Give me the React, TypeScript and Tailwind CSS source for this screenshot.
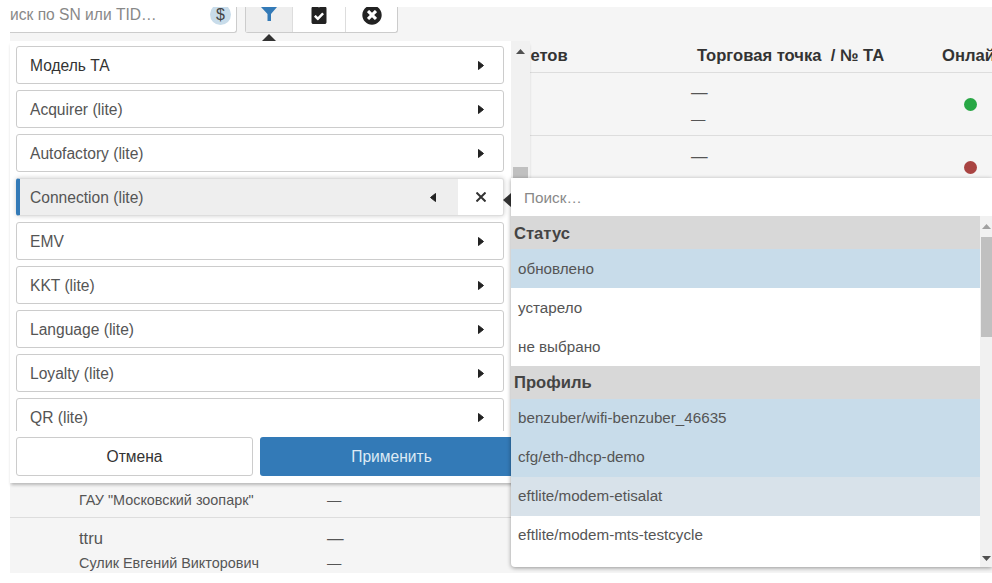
import { FaClipboardCheck, FaTimesCircle } from "react-icons/fa"

const filters = [
  "Модель ТА",
  "Acquirer (lite)",
  "Autofactory (lite)",
  "Connection (lite)",
  "EMV",
  "KKT (lite)",
  "Language (lite)",
  "Loyalty (lite)",
  "QR (lite)",
]

const groups = [
  {
    title: "Статус",
    head: "pt-[3px]",
    items: [
      { label: "обновлено", tone: "bg-[#c8dcea] pt-[2px]" },
      { label: "устарело", tone: "pt-[2px]" },
      { label: "не выбрано", tone: "pt-[2px]" },
    ],
  },
  {
    title: "Профиль",
    head: "pt-[2px]",
    items: [
      { label: "benzuber/wifi-benzuber_46635", tone: "bg-[#c8dcea]" },
      { label: "cfg/eth-dhcp-demo", tone: "bg-[#c8dcea]" },
      { label: "eftlite/modem-etisalat", tone: "bg-[#d8e2ea]" },
      { label: "eftlite/modem-mts-testcycle", tone: "" },
    ],
  },
]

function Caret({ dir }: { dir: "left" | "right" }) {
  return (
    <svg width="8" height="11" viewBox="0 0 8 11" className="fill-[#222] stroke-[#222]">
      <path strokeWidth="1" strokeLinejoin="round" d={dir === "right" ? "M1.5 1.5 L6.5 5.5 L1.5 9.5 Z" : "M6.5 1.5 L1.5 5.5 L6.5 9.5 Z"} />
    </svg>
  )
}

function FilterRow({ name }: { name: string }) {
  if (name === "Connection (lite)") {
    return (
      <div className="flex h-[38px] shrink-0 overflow-hidden rounded-[3px] border border-l-4 border-[#ddd] border-l-[#337ab7] bg-[#eeeeee] shadow-[0_0_5px_rgba(0,0,0,0.2)]">
        <div className="flex flex-1 items-center justify-between pl-[10px] pr-5">
          <span className="pt-[1px] text-[#555]">{name}</span>
          <Caret dir="left" />
        </div>
        <div className="flex w-[46px] items-center justify-center border-l border-[#eee] bg-white">
          <svg width="10" height="10" viewBox="0 0 10 10" className="stroke-[#333] stroke-2">
            <path d="M0.5 0.5 L9.5 9.5 M9.5 0.5 L0.5 9.5" />
          </svg>
        </div>
      </div>
    )
  }
  return (
    <div className="flex h-[38px] shrink-0 items-center justify-between rounded-[3px] border border-[#ccc] bg-white pl-[13px] pr-[18px]">
      <span className={name === "Модель ТА" ? "pt-[1px] text-[#333]" : "pt-[1px] text-[#555]"}>{name}</span>
      <Caret dir="right" />
    </div>
  )
}

function Scrollbar({ thumb }: { thumb: string }) {
  return (
    <div className="flex w-[19px] shrink-0 flex-col items-center bg-[#f1f1f1]">
      <svg width="9" height="5" viewBox="0 0 9 5" className="mt-[8px] shrink-0 fill-[#505050]">
        <path d="M0 5 L4.5 0 L9 5 Z" />
      </svg>
      <div className={thumb} />
    </div>
  )
}

export default function App() {
  return (
    <div className="relative h-[583px] w-[992px] overflow-hidden bg-white font-['Liberation_Sans',Arial,sans-serif] text-[14.4px] text-[#555]">
      <div className="ml-[10px] mt-[7px] h-[566px] overflow-hidden bg-[#f5f5f5]">
        <div className="flex h-[26px] gap-2">
          <div className="flex w-[227px] justify-between rounded-br-[3px] border-b border-r border-[#ccc] bg-white pr-[5px]">
            <span className="overflow-hidden whitespace-nowrap text-[15.6px] leading-[16px] text-[#888]">иск по SN или TID…</span>
            <span className="-mt-[3px] flex h-[21px] w-[21px] items-center justify-center rounded-full bg-[#c8dcea] text-[16px] text-[#444]">$</span>
          </div>
          <div className="flex rounded-b-[3px] border-x border-b border-[#ccc] bg-white">
            <div className="flex w-[46px] items-start justify-center overflow-hidden bg-[#eeeeee]">
              <svg width="16" height="14" viewBox="0 0 16 14" className="fill-[#337ab7]">
                <path d="M0 0 H16 L10 7 V14 H6.5 V7 Z" />
              </svg>
            </div>
            <div className="flex w-[53px] items-start justify-center overflow-hidden border-l border-[#ddd]">
              <FaClipboardCheck className="-mt-[3px] text-[20px] text-[#222]" />
            </div>
            <div className="flex w-[52px] items-start justify-center overflow-hidden border-l border-[#ddd]">
              <FaTimesCircle className="-mt-[2px] text-[20px] text-[#222]" />
            </div>
          </div>
        </div>

        <div className="mt-[7px] grid h-[32px] grid-cols-[69px_248px_364px_251px_1fr] items-center whitespace-nowrap text-[16.6px] font-bold text-[#333]">
          <span />
          <span />
          <span className="pl-[182px]">Счетов</span>
          <span className="pl-[6px]">Торговая точка&nbsp; / № ТА</span>
          <span>Онлайн</span>
        </div>

        <div className="grid h-[63px] grid-cols-[69px_248px_364px_251px_1fr] items-center border-t border-[#ddd]">
          <span />
          <span />
          <span />
          <div className="mt-[3px] flex flex-col gap-[6px]">
            <span className="text-[16.6px] leading-[20px]">—</span>
            <span className="leading-[20px]">—</span>
          </div>
          <span className="ml-[22px] h-[13px] w-[13px] rounded-full bg-[#28a745]" />
        </div>
        <div className="grid h-[63px] grid-cols-[69px_248px_364px_251px_1fr] items-start border-t border-[#ddd]">
          <span />
          <span />
          <span />
          <span className="mt-[11px] text-[16.6px] leading-[20px]">—</span>
          <span className="ml-[22px] mt-[25px] h-[13px] w-[13px] rounded-full bg-[#a94442]" />
        </div>

        <div className="h-[283px]" />

        <div className="grid h-[36px] grid-cols-[69px_248px_1fr] items-center pt-[4px]">
          <span />
          <span>ГАУ "Московский зоопарк"</span>
          <span>—</span>
        </div>
        <div className="grid grid-cols-[69px_248px_1fr] border-t border-[#ddd] pt-[11px]">
          <span />
          <span className="text-[16.6px] leading-[20px]">ttru</span>
          <span className="text-[16.6px] leading-[20px]">—</span>
          <span />
          <span className="mt-[4px] leading-[20px]">Сулик Евгений Викторович</span>
          <span className="mt-[4px] leading-[20px]">—</span>
        </div>
      </div>

      {/* фильтры */}
      <svg width="14" height="7" viewBox="0 0 14 7" className="absolute left-[262px] top-[34px] fill-[#333]">
        <path d="M0 7 L7 0 L14 7 Z" />
      </svg>
      <div className="absolute left-[10px] top-[41px] flex h-[442px] w-[520px] flex-col bg-white text-[15.6px] shadow-[0_3px_3px_-1px_rgba(0,0,0,0.25)]">
        <div className="flex h-[390px] overflow-hidden">
          <div className="flex flex-1 flex-col gap-[6px] pl-[6px] pr-[7px] pt-[5px]">
            {filters.map((name) => (
              <FilterRow key={name} name={name} />
            ))}
          </div>
          <Scrollbar thumb="mt-[113px] h-[14px] w-[15px] bg-[#c0c0c0]" />
        </div>
        <div className="flex gap-[7px] pl-[6px] pt-[6px]">
          <div className="flex h-[39px] w-[237px] items-center justify-center rounded-[3px] border border-[#ccc] bg-white text-[#333]">Отмена</div>
          <div className="flex h-[39px] w-[263px] items-center justify-center rounded-[3px] bg-[#337ab7] text-[#ddeaf5]">Применить</div>
        </div>
      </div>

      {/* выпадающий список */}
      <svg width="8" height="14" viewBox="0 0 8 14" className="absolute left-[503px] top-[193px] fill-[#333]">
        <path d="M8 0 L0 7 L8 14 Z" />
      </svg>
      <div className="absolute left-[511px] top-[178px] flex h-[389px] w-[481px] flex-col rounded-bl-[4px] bg-white shadow-[0_1px_4px_rgba(0,0,0,0.4)]">
        <div className="flex h-[38px] shrink-0 items-center pl-[13px] pt-[2px] text-[15.3px] text-[#888]">Поиск…</div>
        <div className="flex min-h-0 flex-1">
          <div className="flex-1">
            {groups.map((group) => (
              <div key={group.title}>
                <div className={`flex h-[33px] items-center bg-[#d8d8d8] pl-[3px] text-[16.6px] font-bold text-[#444] ${group.head}`}>{group.title}</div>
                {group.items.map((item) => (
                  <div key={item.label} className={`flex h-[39px] items-center pl-[7px] text-[15.2px] text-[#555] ${item.tone}`}>
                    {item.label}
                  </div>
                ))}
              </div>
            ))}
          </div>
          <div className="flex w-[12px] shrink-0 flex-col items-center bg-[#f1f1f1]">
            <svg width="9" height="5" viewBox="0 0 9 5" className="mt-[8px] shrink-0 fill-[#a0a0a0]">
              <path d="M0 5 L4.5 0 L9 5 Z" />
            </svg>
            <div className="mt-[8px] h-[100px] w-[11px] bg-[#c0c0c0]" />
            <svg width="9" height="5" viewBox="0 0 9 5" className="mb-[6px] mt-auto shrink-0 fill-[#505050]">
              <path d="M0 0 L4.5 5 L9 0 Z" />
            </svg>
          </div>
        </div>
      </div>
    </div>
  )
}
